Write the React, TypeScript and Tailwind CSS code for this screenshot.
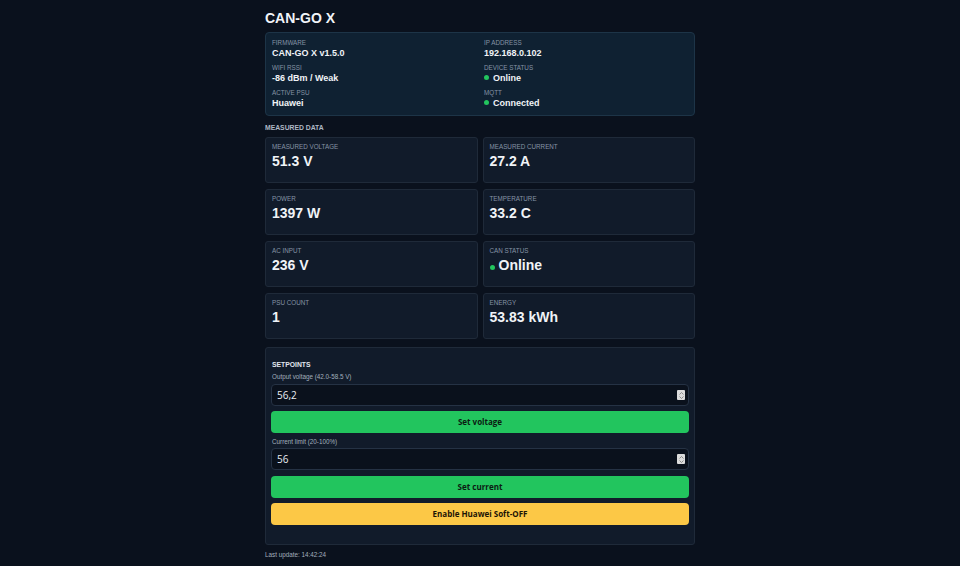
import React from 'react';

const info = [
  { label: 'FIRMWARE', value: 'CAN-GO X v1.5.0' },
  { label: 'IP ADDRESS', value: '192.168.0.102' },
  { label: 'WIFI RSSI', value: '-86 dBm / Weak' },
  { label: 'DEVICE STATUS', value: 'Online', dot: true },
  { label: 'ACTIVE PSU', value: 'Huawei' },
  { label: 'MQTT', value: 'Connected', dot: true },
];

const metrics = [
  { label: 'MEASURED VOLTAGE', value: '51.3 V' },
  { label: 'MEASURED CURRENT', value: '27.2 A' },
  { label: 'POWER', value: '1397 W' },
  { label: 'TEMPERATURE', value: '33.2 C' },
  { label: 'AC INPUT', value: '236 V' },
  { label: 'CAN STATUS', value: 'Online', dot: true },
  { label: 'PSU COUNT', value: '1' },
  { label: 'ENERGY', value: '53.83 kWh' },
];

function Dot({ size = 'sm' }: { size?: 'sm' | 'md' }) {
  return (
    <span
      className={
        size === 'sm'
          ? 'inline-block w-[5px] h-[5px] rounded-full bg-[#22c55e] mr-[4px] align-middle relative -top-px'
          : 'inline-block w-[5px] h-[5px] rounded-full bg-[#22c55e] mr-[4px] align-middle relative top-px'
      }
    />
  );
}

function NumberField({ value }: { value: string }) {
  return (
    <div className="relative">
      <input
        type="text"
        defaultValue={value}
        className="block w-full h-[22px] rounded-[4px] border border-[#253244] bg-[#0a111c] pl-[5px] pr-[20px] text-[10px] text-[#e8edf3] outline-none"
        style={{ fontFamily: '"Open Sans", "Noto Sans", sans-serif' }}
      />
      <span className="absolute right-[4px] top-[6px] w-[8px] h-[10px] bg-[#dcdcdc] rounded-[1px] flex flex-col items-center justify-center gap-px">
        <svg width="5" height="3" viewBox="0 0 5 3">
          <path d="M0.5 2.5 L2.5 0.5 L4.5 2.5" stroke="#777" strokeWidth="0.8" fill="none" />
        </svg>
        <svg width="5" height="3" viewBox="0 0 5 3">
          <path d="M0.5 0.5 L2.5 2.5 L4.5 0.5" stroke="#777" strokeWidth="0.8" fill="none" />
        </svg>
      </span>
    </div>
  );
}

export default function App() {
  return (
    <div
      className="min-h-screen bg-[#0a111d] text-[#e5e9ef]"
      style={{ fontFamily: '"Liberation Sans", Arial, sans-serif' }}
    >
      <div className="w-[430px] mx-auto pt-[10px] pb-[8px]">
        <h1 className="text-[14px] leading-[16px] font-bold text-[#f1f4f8]">CAN-GO X</h1>

        {/* device info */}
        <div className="mt-[6px] rounded-[4px] border border-[#1d3447] bg-[#0f2132] px-[6px] pt-[5px] pb-[5px] grid grid-cols-2 gap-x-[8px] gap-y-[3px]">
          {info.map((item) => (
            <div key={item.label}>
              <div className="text-[6.3px] leading-[9px] text-[#8593a5]">{item.label}</div>
              <div className="text-[9px] leading-[13px] font-bold text-[#f0f3f7]">
                {item.dot && <Dot />}
                {item.value}
              </div>
            </div>
          ))}
        </div>

        <div className="mt-[7px] mb-[4px] text-[6.8px] leading-[10px] font-bold text-[#aeb8c5]">MEASURED DATA</div>

        {/* measured data */}
        <div className="grid grid-cols-2 gap-x-[5px] gap-y-[6px]">
          {metrics.map((m) => (
            <div key={m.label} className="h-[46px] rounded-[3px] border border-[#1f2a39] bg-[#111b2a] px-[6px] pt-[4px]">
              <div className="text-[6.3px] leading-[9px] text-[#8593a5]">{m.label}</div>
              <div className="mt-[1px] text-[14px] leading-[18px] font-bold text-[#f0f3f7]">
                {m.dot && <Dot size="md" />}
                {m.value}
              </div>
            </div>
          ))}
        </div>

        {/* setpoints */}
        <div className="mt-[8px] rounded-[3px] border border-[#1f2a39] bg-[#111b2a] px-[5px] pt-[6px] pb-[19px]">
          <div className="mt-[6px] ml-px text-[6.8px] leading-[10px] font-bold text-[#e2e7ee]">SETPOINTS</div>
          <div className="mt-[2px] ml-px text-[6.3px] leading-[9px] text-[#a3afbd]">Output voltage (42.0-58.5 V)</div>
          <div className="mt-[3px]">
            <NumberField value="56,2" />
          </div>
          <button
            className="block mt-[5px] w-full h-[22px] rounded-[4px] bg-[#22c55e] text-[8px] font-bold text-[#0b1b12]"
            style={{ fontFamily: '"Open Sans", "Noto Sans", sans-serif' }}
          >
            Set voltage
          </button>
          <div className="mt-[4px] ml-px text-[6.3px] leading-[9px] text-[#a3afbd]">Current limit (20-100%)</div>
          <div className="mt-[2px]">
            <NumberField value="56" />
          </div>
          <button
            className="block mt-[6px] w-full h-[22px] rounded-[4px] bg-[#22c55e] text-[8px] font-bold text-[#0b1b12]"
            style={{ fontFamily: '"Open Sans", "Noto Sans", sans-serif' }}
          >
            Set current
          </button>
          <button
            className="block mt-[5px] w-full h-[22px] rounded-[4px] bg-[#fcc846] text-[8px] font-bold text-[#1c1405]"
            style={{ fontFamily: '"Open Sans", "Noto Sans", sans-serif' }}
          >
            Enable Huawei Soft-OFF
          </button>
        </div>

        <div className="mt-[5px] text-[6.3px] leading-[9px] text-[#a3afbd]">Last update: 14:42:24</div>
      </div>
    </div>
  );
}
